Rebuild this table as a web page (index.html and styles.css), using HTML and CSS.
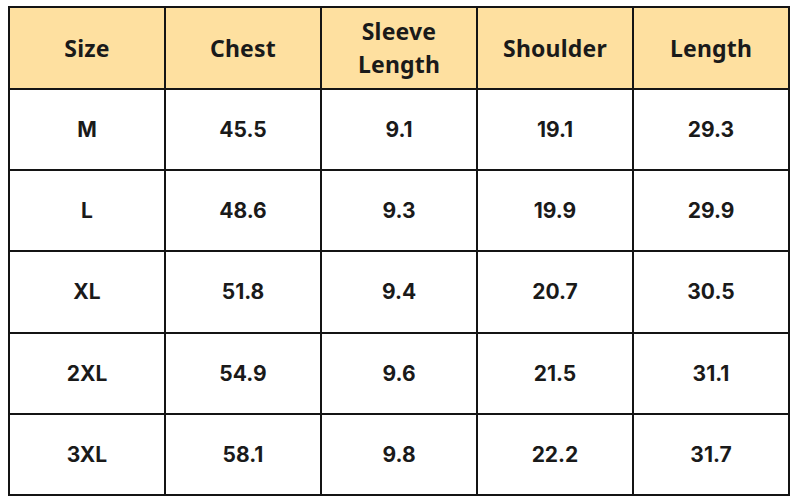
FILE: index.html
```html
<!DOCTYPE html>
<html>
<head>
<meta charset="utf-8">
<link rel="stylesheet" href="styles.css">
</head>
<body>
<div class="chart">
  <div class="cell head">Size</div>
  <div class="cell head">Chest</div>
  <div class="cell head">Sleeve<br>Length</div>
  <div class="cell head">Shoulder</div>
  <div class="cell head">Length</div>

  <div class="cell">M</div><div class="cell">45.5</div><div class="cell">9.1</div><div class="cell">19.1</div><div class="cell">29.3</div>
  <div class="cell">L</div><div class="cell">48.6</div><div class="cell">9.3</div><div class="cell">19.9</div><div class="cell">29.9</div>
  <div class="cell">XL</div><div class="cell">51.8</div><div class="cell">9.4</div><div class="cell">20.7</div><div class="cell">30.5</div>
  <div class="cell">2XL</div><div class="cell">54.9</div><div class="cell">9.6</div><div class="cell">21.5</div><div class="cell">31.1</div>
  <div class="cell">3XL</div><div class="cell">58.1</div><div class="cell">9.8</div><div class="cell">22.2</div><div class="cell">31.7</div>
</div>
</body>
</html>
```
FILE: styles.css
```css
html, body {
  margin: 0;
  background: #ffffff;
}
body {
  padding: 6px 0 0 8px;
}
.chart {
  box-sizing: border-box;
  width: 782px;
  height: 490px;
  padding: 2px;
  gap: 2px;
  background: #141414;
  display: grid;
  grid-template-columns: repeat(5, 1fr);
  grid-template-rows: 80px repeat(5, 1fr);
}
.cell {
  background: #ffffff;
  display: flex;
  align-items: center;
  justify-content: center;
  text-align: center;
  color: #1a1a1a;
  font-family: Inter, "Liberation Sans", sans-serif;
  font-weight: 700;
  font-size: 21px;
}
.head {
  background: #fee0a0;
  font-family: "Noto Sans", sans-serif;
  font-weight: 700;
  font-size: 23px;
  line-height: 33px;
  letter-spacing: 0.2px;
}
```
